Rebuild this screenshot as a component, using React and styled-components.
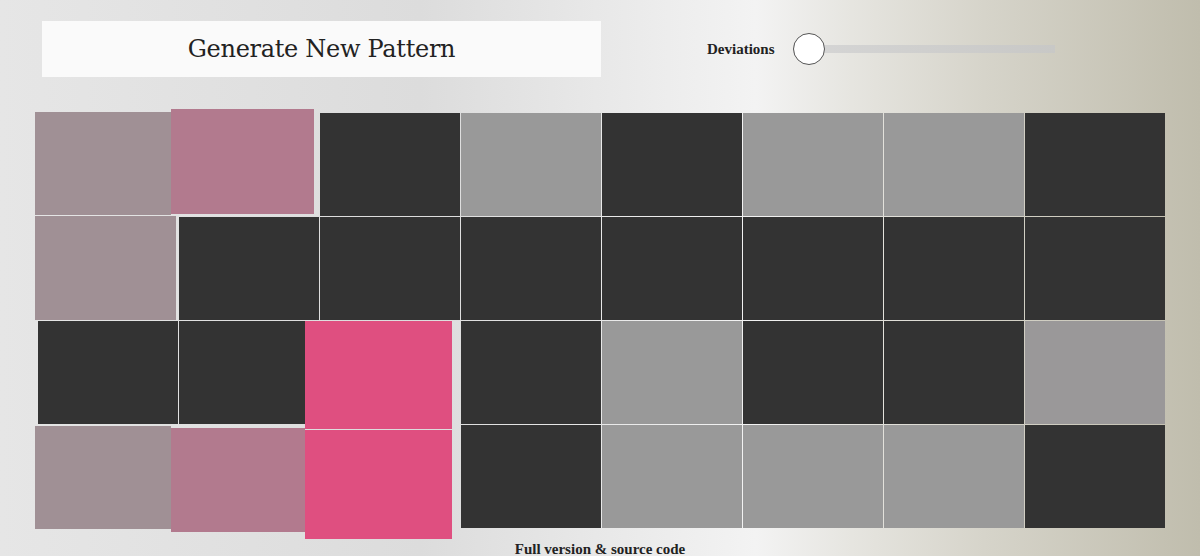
import React from "react";
import styled, { createGlobalStyle } from "styled-components";

const Global = createGlobalStyle`
  html, body {
    margin: 0;
    padding: 0;
    height: 556px;
    overflow: hidden;
  }
  body {
    background: linear-gradient(to right, #e6e6e6 0%, #dcdcdc 35%, #f3f3f3 63%, #e6e5e0 71%, #d6d4ca 82%, #c0bdad 100%);
    font-family: "Liberation Serif", "DejaVu Serif", serif;
    color: #222;
  }
`;

const Page = styled.div`
  display: flex;
  flex-direction: column;
  height: 556px;
`;

const Toolbar = styled.div`
  display: flex;
  align-items: center;
  padding: 21px 0 0 42px;
  height: 56px;
`;

const GenerateButton = styled.button`
  width: 559px;
  height: 56px;
  border: none;
  background: #fafafa;
  font-family: "DejaVu Serif", serif;
  font-size: 24px;
  color: #222;
  letter-spacing: -0.3px;
  cursor: pointer;
  padding: 0;
`;

const Control = styled.div`
  display: flex;
  align-items: center;
  margin-left: 106px;
  gap: 18px;
`;

const Label = styled.span`
  font-family: "Liberation Serif", serif;
  font-size: 15px;
  font-weight: 600;
  color: #222;
`;

const Track = styled.div`
  position: relative;
  width: 262px;
  height: 8px;
  background: linear-gradient(to right, #d6d6d6, #c8c8c6);
`;

const Thumb = styled.div`
  position: absolute;
  left: 0;
  top: 50%;
  width: 30px;
  height: 30px;
  margin-top: -16px;
  border-radius: 50%;
  background: #fff;
  border: 1px solid #555;
`;

const Grid = styled.div`
  display: grid;
  grid-template-columns: repeat(8, 140px);
  grid-auto-rows: 103px;
  gap: 1px;
  margin: 36px 0 0 38px;
`;

const Cell = styled.div`
  position: relative;
`;

const Tile = styled.div`
  position: absolute;
  left: 0;
  top: 0;
  width: 100%;
  height: 100%;
  background: ${(p) => p.$color};
  z-index: ${(p) => (p.$raised ? 2 : 1)};
`;

const Footer = styled.div`
  text-align: center;
  margin-top: 13px;
  font-family: "Liberation Serif", serif;
  font-size: 15px;
  font-weight: 600;
  color: #222;
`;

const D = "#333333";
const G = "#999999";
const M = "#a09095";
const P = "#b27a8e";
const H = "#df4f80";

// [color, dx, dy, width, height] — deviations from the nominal cell box (140 x 103)
const rows = [
  [[M, -3, -1, 136, 103], [P, -8, -4, 143, 105], [D], [G], [D], [G], [G], [D]],
  [[M, -3, -1, 141, 104], [D], [D], [D], [D], [D], [D], [D]],
  [[D], [D], [H, -15, 0, 147, 108], [D], [G], [D], [D], ["#9a9899"]],
  [[M, -3, 1, 136, 103], [P, -8, 3, 134, 104], [H, -15, 5, 147, 109], [D], [G], [G], [G], [D]],
];

export default function App() {
  return (
    <Page>
      <Global />
      <Toolbar>
        <GenerateButton>Generate New Pattern</GenerateButton>
        <Control>
          <Label>Deviations</Label>
          <Track>
            <Thumb />
          </Track>
        </Control>
      </Toolbar>
      <Grid>
        {rows.map((row, r) =>
          row.map(([color, dx, dy, w, h], c) => {
            const dev = dx !== undefined;
            return (
              <Cell key={`${r}-${c}`}>
                <Tile
                  $color={color}
                  $raised={dev}
                  style={
                    dev
                      ? { transform: `translate(${dx}px, ${dy}px)`, width: w, height: h }
                      : undefined
                  }
                />
              </Cell>
            );
          })
        )}
      </Grid>
      <Footer>Full version &amp; source code</Footer>
    </Page>
  );
}
